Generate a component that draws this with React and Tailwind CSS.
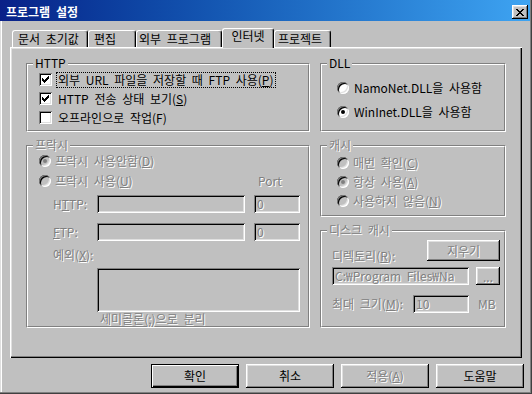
import React from 'react'

// classic win32 bevels
const sunken =
  'shadow-[inset_1px_1px_0_#808080,inset_-1px_-1px_0_#fff,inset_2px_2px_0_#000,inset_-2px_-2px_0_#dfdfdf]'
const raised =
  'shadow-[inset_-1px_-1px_0_#000,inset_1px_1px_0_#fff,inset_-2px_-2px_0_#808080,inset_2px_2px_0_#dfdfdf]'
const dis = 'text-[#808080] [text-shadow:1px_1px_0_#fff]'

const closeX = Array.from({ length: 7 }, (_, i) => `M${i} ${i}h2v1h-2z M${6 - i} ${i}h2v1h-2z`).join(' ')

const Check = ({ checked }) => (
  <span className={`flex h-[13px] w-[13px] shrink-0 items-center justify-center bg-white ${sunken}`}>
    {checked && (
      <svg width="7" height="7" viewBox="0 0 7 7" shapeRendering="crispEdges">
        <path
          fill="#000"
          d="M6 0h1v1h-1z M5 1h2v1h-2z M0 2h1v1h-1z M4 2h3v1h-3z M0 3h2v1h-2z M3 3h3v1h-3z M0 4h5v1h-5z M1 5h3v1h-3z M2 6h1v1h-1z"
        />
      </svg>
    )}
  </span>
)

const Radio = ({ checked, disabled }) => (
  <span
    className={`flex h-[12px] w-[12px] shrink-0 items-center justify-center rounded-full ${
      disabled ? 'bg-[#c0c0c0]' : 'bg-white'
    } ${sunken}`}
  >
    {checked && (
      <span className={`h-[4px] w-[4px] rounded-full ${disabled ? 'bg-[#808080]' : 'bg-black'}`} />
    )}
  </span>
)

const Group = ({ label, disabled, className = '', children }) => (
  <div
    className={`flex shrink-0 flex-col border border-t-[#808080] border-l-[#808080] border-r-white border-b-white ${className}`}
  >
    <div className="flex flex-1 flex-col border border-t-white border-l-white border-r-[#808080] border-b-[#808080]">
      <span className={`-mt-[9px] ml-[5px] w-fit bg-[#c0c0c0] px-[2px] ${disabled ? dis : ''}`}>{label}</span>
      {children}
    </div>
  </div>
)

const Field = ({ className = '', children }) => (
  <div className={`flex h-[18px] items-center overflow-hidden whitespace-nowrap pl-[3px] ${sunken} ${className}`}>
    {children}
  </div>
)

const Tab = ({ className = '', children }) => (
  <div
    className={`flex h-[17px] shrink-0 items-center whitespace-nowrap rounded-t-[3px] border-t border-l border-r border-t-white border-l-white border-r-black shadow-[inset_-1px_0_0_#808080] ${className}`}
  >
    {children}
  </div>
)

export default function App() {
  return (
    <div className="flex h-[394px] w-[532px] flex-col overflow-hidden bg-[#c0c0c0] font-['Noto_Sans_CJK_KR',sans-serif] text-[12px] leading-[14px] text-black [word-spacing:3px] shadow-[inset_-1px_-1px_0_#404040,inset_-2px_-2px_0_#808080,inset_1px_0_0_#dfdfdf,inset_2px_0_0_#fff]">
      {/* Title bar */}
      <div className="mr-[2px] flex h-[21px] shrink-0 items-start justify-between bg-linear-to-r from-[#0a2088] to-[#3ea4f2]">
        <span className="ml-[6px] mt-[5px] font-bold text-white">프로그램 설정</span>
        <button className={`mr-[2px] mt-[5px] flex h-[14px] w-[16px] items-center justify-center bg-[#c0c0c0] ${raised}`}>
          <svg width="8" height="7" viewBox="0 0 8 7" shapeRendering="crispEdges">
            <path fill="#000" d={closeX} />
          </svg>
        </button>
      </div>

      {/* Tabs */}
      <div className="ml-[12px] mt-[7px] flex h-[19px] shrink-0 items-end">
        <Tab className="w-[76px] pl-[5px]">문서 초기값</Tab>
        <Tab className="w-[48px] pl-[5px]">편집</Tab>
        <Tab className="w-[86px] pl-[2px]">외부 프로그램</Tab>
        <Tab className="relative z-10 -mb-[1px] h-[20px] w-[52px] justify-center bg-[#c0c0c0] pb-[5px]">인터넷</Tab>
        <Tab className="w-[57px] pl-[3px]">프로젝트</Tab>
      </div>

      {/* Panel */}
      <div className="ml-[10px] flex h-[311px] w-[512px] shrink-0 gap-[10px] pl-[16px] pt-[16px] shadow-[inset_1px_1px_0_#fff,inset_-1px_-1px_0_#000,inset_-2px_-2px_0_#808080,inset_2px_2px_0_#dfdfdf]">
        {/* Left column */}
        <div className="flex w-[284px] flex-col gap-[13px]">
          <Group label="HTTP" className="h-[69px]">
            <div className="flex h-[19px] items-center pl-[11px]">
              <Check checked />
              <span className="ml-[4px] h-[16px] whitespace-nowrap border border-dotted border-black px-[1px]">
                외부 URL 파일을 저장할 때 FTP 사용(<u>P</u>)
              </span>
            </div>
            <div className="flex h-[19px] items-center pl-[11px]">
              <Check checked />
              <span className="ml-[6px] whitespace-nowrap">
                HTTP 전송 상태 보기(<u>S</u>)
              </span>
            </div>
            <div className="flex h-[19px] items-center pl-[11px]">
              <Check />
              <span className="ml-[6px] whitespace-nowrap">오프라인으로 작업(F)</span>
            </div>
          </Group>

          <Group label="프락시" disabled className="h-[183px]">
            <div className={`flex flex-col pl-[11px] ${dis}`}>
              <div className="flex h-[18px] items-center">
                <Radio checked disabled />
                <span className="ml-[4px]">
                  프락시 사용안함(<u>D</u>)
                </span>
              </div>
              <div className="mt-[2px] grid h-[18px] grid-cols-[215px_1fr] items-center">
                <div className="flex items-center">
                  <Radio disabled />
                  <span className="ml-[4px]">
                    프락시 사용(<u>U</u>)
                  </span>
                </div>
                <span className="ml-[4px]">Port</span>
              </div>
              <div className="mt-[5px] grid auto-rows-[18px] grid-cols-[49px_148px_46px] items-center gap-x-[9px] gap-y-[10px]">
                <span className="pl-[14px]">
                  H<u>T</u>TP:
                </span>
                <Field />
                <Field>0</Field>
                <span className="pl-[14px]">
                  <u>F</u>TP:
                </span>
                <Field />
                <Field>0</Field>
              </div>
              <span className="mt-[7px] pl-[14px]">
                예외(<u>X</u>):
              </span>
              <div className={`ml-[58px] mt-[6px] h-[44px] w-[203px] ${sunken}`} />
              <span className="ml-[61px]">세미콜론(;)으로 분리</span>
            </div>
          </Group>
        </div>

        {/* Right column */}
        <div className="flex w-[186px] flex-col gap-[13px]">
          <Group label="DLL" className="h-[69px]">
            <div className="mt-[6px] flex flex-col pl-[15px]">
              <div className="flex h-[24px] items-center">
                <Radio />
                <span className="ml-[5px] whitespace-nowrap">NamoNet.DLL을 사용함</span>
              </div>
              <div className="flex h-[24px] items-center">
                <Radio checked />
                <span className="ml-[5px] whitespace-nowrap">WinInet.DLL을 사용함</span>
              </div>
            </div>
          </Group>

          <Group label="캐시" disabled className="h-[72px]">
            <div className={`mt-[1px] flex flex-col pl-[15px] ${dis}`}>
              <div className="flex h-[19px] items-center">
                <Radio disabled />
                <span className="ml-[4px]">
                  매번 확인(<u>C</u>)
                </span>
              </div>
              <div className="flex h-[19px] items-center">
                <Radio checked disabled />
                <span className="ml-[4px]">
                  항상 사용(<u>A</u>)
                </span>
              </div>
              <div className="flex h-[19px] items-center">
                <Radio disabled />
                <span className="ml-[4px]">
                  사용하지 않음(<u>N</u>)
                </span>
              </div>
            </div>
          </Group>

          <Group label="디스크 캐시" disabled className="h-[98px]">
            <div className={`flex flex-col pl-[10px] pr-[4px] ${dis}`}>
              <div className="mt-[3px] flex h-[21px]">
                <span className="-mb-[2px] self-end">
                  디렉토리(<u>R</u>):
                </span>
                <div className={`ml-auto flex h-[21px] w-[73px] items-center justify-center ${raised}`}>지우기</div>
              </div>
              <div className="mt-[6px] flex gap-[7px]">
                <Field className="w-[137px]">C:₩Program Files₩Na</Field>
                <div className={`flex h-[18px] w-[24px] items-end justify-center pb-[3px] leading-[10px] ${raised}`}>
                  ...
                </div>
              </div>
              <div className="mt-[10px] flex h-[18px] items-center">
                <span className="w-[81px] shrink-0 whitespace-nowrap">
                  최대 크기(<u>M</u>):
                </span>
                <Field className="w-[56px]">10</Field>
                <span className="ml-[9px]">MB</span>
              </div>
            </div>
          </Group>
        </div>
      </div>

      {/* Dialog buttons */}
      <div className="ml-[151px] mt-[6px] flex gap-[7px]">
        <button className="flex h-[24px] w-[88px] items-center justify-center border border-black shadow-[inset_1px_1px_0_#fff,inset_-1px_-1px_0_#000,inset_-2px_-2px_0_#808080]">
          확인
        </button>
        <button className={`flex h-[24px] w-[88px] items-center justify-center ${raised}`}>취소</button>
        <button className={`flex h-[24px] w-[88px] items-center justify-center ${raised} ${dis}`}>
          적용(<u>A</u>)
        </button>
        <button className={`flex h-[24px] w-[88px] items-center justify-center ${raised}`}>도움말</button>
      </div>
    </div>
  )
}
